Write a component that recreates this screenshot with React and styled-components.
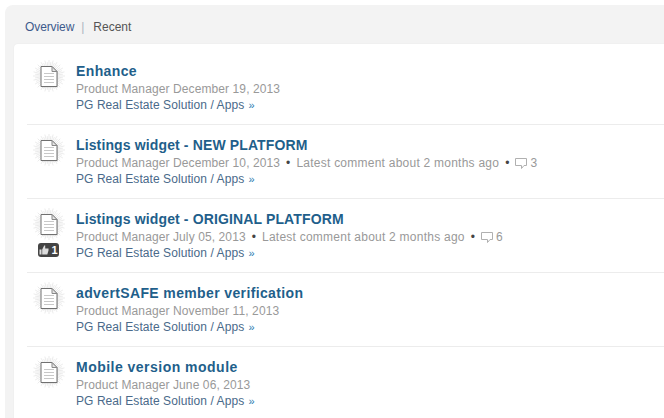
import React from 'react'
import styled, { createGlobalStyle } from 'styled-components'

const Global = createGlobalStyle`
  html, body { margin: 0; padding: 0; background: #fff; overflow: hidden; }
  body { font-family: "Liberation Sans", Arial, sans-serif; }
`

const items = [
  { title: 'Enhance', spacing: 0.38, author: 'Product Manager', date: 'December 19, 2013' },
  { title: 'Listings widget - NEW PLATFORM', spacing: 0.13, author: 'Product Manager', date: 'December 10, 2013', comments: 3 },
  { title: 'Listings widget - ORIGINAL PLATFORM', spacing: 0.13, author: 'Product Manager', date: 'July 05, 2013', comments: 6, likes: 1 },
  { title: 'advertSAFE member verification', spacing: 0.37, author: 'Product Manager', date: 'November 11, 2013' },
  { title: 'Mobile version module', spacing: 0.48, author: 'Product Manager', date: 'June 06, 2013' },
]

function DocIcon() {
  const rays = []
  for (let i = 0; i < 48; i++) {
    const a = (i * Math.PI * 2) / 48
    const outer = i % 2 ? 14 : 16
    rays.push(
      <line
        key={i}
        x1={16 + Math.cos(a) * 8}
        y1={16 + Math.sin(a) * 8}
        x2={16 + Math.cos(a) * outer}
        y2={16 + Math.sin(a) * outer}
        stroke="#e2e2e2"
        strokeWidth="0.7"
      />
    )
  }
  return (
    <svg width="32" height="32" viewBox="0 0 32 32">
      {rays}
      <path d="M9 7.5h11l5 5v15H9z" fill="#bbb" opacity="0.5" />
      <path d="M8 6.5h11l5 5v15H8z" fill="#fff" stroke="#707070" strokeWidth="1" />
      <path d="M19 6.5v5h5z" fill="#e4e4e4" stroke="#888" strokeWidth="1" />
      <path d="M11 13.5h10M11 16.5h10M11 19.5h10M11 22.5h10" stroke="#c8c8c8" strokeWidth="1" />
    </svg>
  )
}

function CommentIcon() {
  return (
    <svg width="14" height="13" viewBox="0 0 14 13">
      <path d="M1.5 1.5h11v7h-2.5l-2.5 3v-3h-6z" fill="#fff" stroke="#b0b0b0" strokeWidth="1" strokeLinejoin="round" />
    </svg>
  )
}

function ThumbIcon() {
  return (
    <svg width="10" height="10" viewBox="0 0 10 10">
      <path d="M0.5 4.5h2v5h-2zM3.2 4.5l2-4h1v3h3.3v2l-1.2 4h-5.1z" fill="#ddd" />
    </svg>
  )
}

export default function App() {
  return (
    <>
      <Global />
      <Page>
        <Panel>
          <Tabs>
            <TabLink>Overview</TabLink>
            <Divider>|</Divider>
            <TabCurrent>Recent</TabCurrent>
          </Tabs>
          <Card>
            {items.map((item) => (
              <Row key={item.title}>
                <IconCol>
                  <DocIcon />
                  {item.likes && (
                    <LikeBadge>
                      <ThumbIcon />
                      <LikeCount>{item.likes}</LikeCount>
                    </LikeBadge>
                  )}
                </IconCol>
                <Body>
                  <Title $spacing={item.spacing}>{item.title}</Title>
                  <Meta>
                    {item.author} {item.date}
                    {item.comments && (
                      <>
                        <Dot>•</Dot>
                        <Latest>Latest comment about 2 months ago</Latest>
                        <Dot>•</Dot>
                        <Comments>
                          <CommentIcon />
                          {item.comments}
                        </Comments>
                      </>
                    )}
                  </Meta>
                  <Path>
                    PG Real Estate Solution / Apps <Arrow>»</Arrow>
                  </Path>
                </Body>
              </Row>
            ))}
          </Card>
        </Panel>
      </Page>
    </>
  )
}

const Page = styled.div`
  width: 664px;
  height: 418px;
  padding: 5px 0 0 5px;
  box-sizing: border-box;
  overflow: hidden;
`

const Panel = styled.div`
  width: 720px;
  height: 500px;
  background: #f3f3f3;
  border-radius: 8px 0 0 0;
  padding-left: 9px;
  box-sizing: border-box;
`

const Tabs = styled.div`
  height: 39px;
  display: flex;
  align-items: center;
  padding: 4px 0 0 11px;
  box-sizing: border-box;
  font-size: 12px;
`

const TabLink = styled.span`
  color: #3d5a8c;
  letter-spacing: -0.1px;
`

const Divider = styled.span`
  color: #a9b4c0;
  margin: 0 9px 0 7px;
`

const TabCurrent = styled.span`
  color: #555;
`

const Card = styled.div`
  background: #fff;
  border-radius: 4px 0 0 0;
  padding: 7px 0 0 13px;
  box-shadow: 0 0 2px rgba(0, 0, 0, 0.06);
`

const Row = styled.div`
  display: flex;
  height: 74px;
  box-sizing: border-box;
  border-bottom: 1px solid #ececec;
  padding-top: 9px;
`

const IconCol = styled.div`
  width: 49px;
  padding-right: 6px;
  box-sizing: border-box;
  display: flex;
  flex-direction: column;
  align-items: center;
  flex: none;
`

const LikeBadge = styled.div`
  display: flex;
  align-items: center;
  justify-content: center;
  gap: 2px;
  width: 21px;
  height: 14px;
  margin-top: 3px;
  border-radius: 3px;
  background: #444;
`

const LikeCount = styled.span`
  color: #fff;
  font-size: 11px;
  font-weight: bold;
`

const Body = styled.div`
  display: flex;
  flex-direction: column;
  margin-top: 2px;
`

const Title = styled.div`
  font-size: 14px;
  font-weight: bold;
  color: #1f5f8b;
  line-height: 18px;
  letter-spacing: ${(p) => p.$spacing}px;
`

const Meta = styled.div`
  display: flex;
  align-items: center;
  white-space: pre;
  font-size: 12px;
  line-height: 16px;
  margin-top: 1px;
  letter-spacing: 0.1px;
  color: #999;
`

const Latest = styled.span`
  letter-spacing: 0.24px;
`

const Dot = styled.span`
  color: #444;
  margin: 0 6px;
`

const Comments = styled.span`
  display: flex;
  align-items: center;
  gap: 2px;
  margin-left: -1px;
`

const Path = styled.div`
  font-size: 12px;
  line-height: 16px;
  letter-spacing: 0.07px;
  color: #4a6a8a;
`

const Arrow = styled.span`
  color: #2a7ab0;
  font-size: 11px;
  margin-left: 1px;
`
